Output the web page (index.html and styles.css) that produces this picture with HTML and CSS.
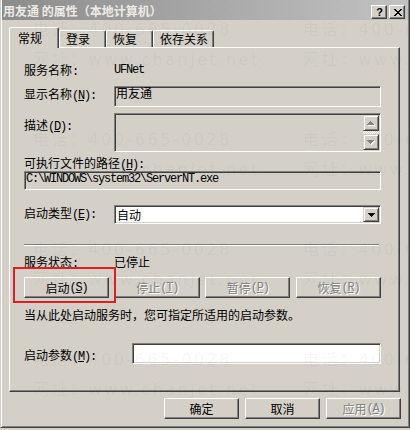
FILE: index.html
```html
<!DOCTYPE html>
<html lang="zh-CN">
<head>
<meta charset="utf-8">
<title>用友通 的属性（本地计算机）</title>
<link rel="stylesheet" href="styles.css">
</head>
<body>
<div class="window">
  <div class="titlebar">
    <span class="title">用友通 的属性（本地计算机）</span>
    <div class="caption-btns">
      <span class="cbtn help">?</span>
      <span class="cbtn close"><svg width="8" height="7" viewBox="0 0 8 7"><path d="M0 0h2v1H0zM6 0h2v1H6zM1 1h2v1H1zM5 1h2v1H5zM2 2h4v1H2zM3 3h2v1H3zM2 4h4v1H2zM1 5h2v1H1zM5 5h2v1H5zM0 6h2v1H0zM6 6h2v1H6z"/></svg></span>
    </div>
  </div>
  <div class="client">
    <div class="tabs">
      <div class="tab active w1">常规</div>
      <div class="tab w2">登录</div>
      <div class="tab w2">恢复</div>
      <div class="tab w4">依存关系</div>
    </div>
    <div class="panel">
      <div class="row r1"><span class="label">服务名称<span class="m">:</span></span><span class="m">UFNet</span></div>
      <div class="row r2"><span class="label lp1">显示名称<span class="m">(<u>N</u>):</span></span><div class="field disabled name">用友通</div></div>
      <div class="row r3"><span class="label lp5">描述<span class="m">(<u>D</u>):</span></span>
        <div class="field disabled desc">
          <div class="vscroll">
            <span class="sbtn"><svg width="8" height="5" viewBox="0 0 8 5"><path fill="#fff" d="M4 1h1v1h1v1h1v1h1v1H1V4h1V3h1V2h1z"/><path fill="#808080" d="M3 0h1v1h1v1h1v1h1v1H0V3h1V2h1V1h1z"/></svg></span>
            <span class="track"></span>
            <span class="sbtn"><svg width="8" height="5" viewBox="0 0 8 5"><path fill="#fff" d="M1 1h7v1H7v1H6v1H5v1H4V4H3V3H2V2H1z"/><path fill="#808080" d="M0 0h7v1H6v1H5v1H4v1H3V3H2V2H1V1H0z"/></svg></span>
          </div>
        </div>
      </div>
      <div class="row r4"><span>可执行文件的路径<span class="m">(<u>H</u>):</span></span></div>
      <div class="row r5"><div class="field disabled path m">C:\WINDOWS\system32\ServerNT.exe</div></div>
      <div class="row r6"><span class="label lp1">启动类型<span class="m">(<u>E</u>):</span></span>
        <div class="field combo"><span class="combo-text">自动</span><span class="sbtn drop"><svg width="7" height="4" viewBox="0 0 7 4"><path d="M0 0h7v1H6v1H5v1H4v1H3V3H2V2H1V1H0z"/></svg></span></div>
      </div>
      <div class="sep"></div>
      <div class="row r7"><span class="label">服务状态<span class="m">:</span></span><span>已停止</span></div>
      <div class="row r8">
        <span class="highlight"></span>
        <button class="btn svc">启动<span class="m">(<u>S</u>)</span></button>
        <button class="btn svc disabled">停止<span class="m">(<u>T</u>)</span></button>
        <button class="btn svc disabled">暂停<span class="m">(<u>P</u>)</span></button>
        <button class="btn svc disabled">恢复<span class="m">(<u>R</u>)</span></button>
      </div>
      <div class="row r9">当从此处启动服务时，您可指定所适用的启动参数。</div>
      <div class="row r10"><span class="label wide lp5">启动参数<span class="m">(<u>M</u>):</span></span><div class="field params"></div></div>
    </div>
    <div class="footer">
      <button class="btn dlg">确定</button>
      <button class="btn dlg">取消</button>
      <button class="btn dlg disabled">应用<span class="m">(<u>A</u>)</span></button>
    </div>
  </div>
  <div class="watermark" aria-hidden="true">
    <div class="wm-cell"><div>电话：400-665-0028</div><div>网址：www.chanjet.net</div></div>
    <div class="wm-cell"><div>电话：400-665-0028</div><div>网址：www.chanjet.net</div></div>
    <div class="wm-cell"><div>电话：400-665-0028</div><div>网址：www.chanjet.net</div></div>
    <div class="wm-cell"><div>电话：400-665-0028</div><div>网址：www.chanjet.net</div></div>
    <div class="wm-cell"><div>电话：400-665-0028</div><div>网址：www.chanjet.net</div></div>
    <div class="wm-cell"><div>电话：400-665-0028</div><div>网址：www.chanjet.net</div></div>
    <div class="wm-cell"><div>电话：400-665-0028</div><div>网址：www.chanjet.net</div></div>
    <div class="wm-cell"><div>电话：400-665-0028</div><div>网址：www.chanjet.net</div></div>
  </div>
</div>
</body>
</html>
```
FILE: styles.css
```css
* { box-sizing: border-box; }
html, body { margin: 0; padding: 0; }
body {
  background: #d4d0c8;
  font-family: "Noto Sans CJK SC", sans-serif;
  font-size: 12px;
  line-height: 14px;
  color: #000;
}
.window {
  position: relative;
  width: 410px;
  height: 428px;
  overflow: hidden;
  background: #d4d0c8;
  border-left: 1px solid #d4d0c8;
  border-right: 1px solid #404040;
  border-bottom: 1px solid #404040;
  box-shadow: inset 1px 0 #fff, inset -1px -1px #808080;
  padding: 0 1px 1px 1px;
}
.titlebar {
  height: 20px;
  display: flex;
  justify-content: space-between;
  align-items: flex-start;
  background: linear-gradient(90deg, #8c8c8c, #c2c2c2);
  padding: 0 3px 0 1px;
}
.title {
  color: #eeebe5;
  font-weight: 700;
  padding-top: 4px;
  white-space: nowrap;
}
.caption-btns { display: flex; gap: 2px; margin-top: 5px; }
.cbtn {
  width: 16px;
  height: 14px;
  background: #d4d0c8;
  border: 1px solid;
  border-color: #fff #404040 #404040 #fff;
  box-shadow: inset -1px -1px #808080;
  display: flex;
  align-items: center;
  justify-content: center;
}
.help { font: bold 11px/1 "Liberation Sans", sans-serif; padding-left: 1px; }
.close svg { display: block; margin-left: 1px; }

.client { padding: 0 8px 0 7px; }
.tabs {
  display: flex;
  align-items: flex-end;
  height: 20px;
  margin-top: 7px;
  position: relative;
  z-index: 2;
}
.tab {
  height: 17px;
  border-top: 1px solid #fff;
  border-left: 1px solid #fff;
  border-right: 1px solid #404040;
  box-shadow: inset -1px 0 #808080;
  border-radius: 2px 2px 0 0;
  padding: 1px 0 0 6px;
  background: #d4d0c8;
  white-space: nowrap;
}
.tab.active { height: 21px; margin-bottom: -1px; padding: 3px 0 0 8px; }
.w1 { width: 50px; }
.w2 { width: 47px; }
.w4 { width: 61px; }

.panel {
  height: 345px;
  border: 1px solid;
  border-color: #fff #404040 #404040 #fff;
  box-shadow: inset -1px -1px #808080;
  padding: 0 18px 0 14px;
  display: flex;
  flex-direction: column;
}
.row { display: flex; align-items: flex-start; flex: none; position: relative; white-space: nowrap; }
.r1 { margin-top: 15px; height: 14px; }
.r2 { margin-top: 9px; height: 21px; }
.r3 { margin-top: 6px; height: 39px; }
.r4 { margin-top: 4px; height: 14px; }
.r5 { margin-top: 1px; height: 19px; }
.r6 { margin-top: 15px; height: 19px; }
.sep {
  margin-top: 20px;
  height: 2px;
  margin-right: 2px;
  border-top: 1px solid #808080;
  border-bottom: 1px solid #fff;
  flex: none;
}
.r7 { margin-top: 9px; height: 14px; }
.r8 { margin-top: 8px; height: 21px; justify-content: space-between; }
.r9 { margin-top: 10px; height: 14px; }
.r10 { margin-top: 21px; height: 21px; }

.label { width: 90px; flex: none; white-space: nowrap; }
.label.wide { width: 108px; }
.lp1 { padding-top: 1px; }
.lp5 { padding-top: 5px; }

.m {
  font-family: "Liberation Mono", monospace;
  letter-spacing: -1.2px;
}
u { text-decoration: underline; text-underline-offset: 1px; }

.field {
  height: 100%;
  flex: 1;
  border: 1px solid;
  border-color: #808080 #fff #fff #808080;
  box-shadow: inset 1px 1px #404040, inset -1px -1px #d4d0c8;
  background: #fff;
}
.field.disabled { background: #d4d0c8; }
.name { padding: 0 1px; line-height: 11px; }
.desc { display: flex; justify-content: flex-end; padding: 1px; }
.vscroll { width: 16px; display: flex; flex-direction: column; }
.sbtn {
  width: 16px;
  height: 16px;
  flex: none;
  background: #d4d0c8;
  border: 1px solid;
  border-color: #d4d0c8 #404040 #404040 #d4d0c8;
  box-shadow: inset 1px 1px #fff, inset -1px -1px #808080;
  display: flex;
  align-items: center;
  justify-content: center;
}
.sbtn svg { display: block; }
.track {
  flex: 1;
  background-image: conic-gradient(#fff 25%, #d4d0c8 0 50%, #fff 0 75%, #d4d0c8 0);
  background-size: 2px 2px;
}
.path { padding: 0 1px; line-height: 15px; }
.combo { display: flex; justify-content: space-between; padding: 1px; }
.combo-text { padding-left: 1px; line-height: 15px; }
.drop { height: 15px; }

.btn {
  font: inherit;
  margin: 0;
  padding: 0;
  background: #d4d0c8;
  color: #000;
  border: 1px solid;
  border-color: #fff #404040 #404040 #fff;
  box-shadow: inset -1px -1px #808080;
  display: flex;
  align-items: center;
  justify-content: center;
  height: 21px;
  white-space: nowrap;
  flex: none;
}
.svc { width: 85px; }
.dlg { width: 75px; }
.btn.disabled { color: #808080; text-shadow: 1px 1px 0 #fff; }

.highlight {
  position: absolute;
  left: -11px;
  top: -10px;
  width: 103px;
  height: 36px;
  border: 2px solid #de1f1f;
  z-index: 1;
}

.footer {
  display: flex;
  justify-content: flex-end;
  gap: 6px;
  margin-top: 6px;
  margin-right: -1px;
}

.watermark {
  position: absolute;
  left: 32px;
  top: 15px;
  display: grid;
  grid-template-columns: 270px 270px;
  grid-auto-rows: 110px;
  color: rgba(0, 0, 0, 0.045);
  font-family: "DejaVu Sans", "Noto Sans CJK SC", sans-serif;
  font-size: 16px;
  line-height: 30px;
  letter-spacing: 2.5px;
  white-space: nowrap;
  pointer-events: none;
  z-index: 5;
}
```
